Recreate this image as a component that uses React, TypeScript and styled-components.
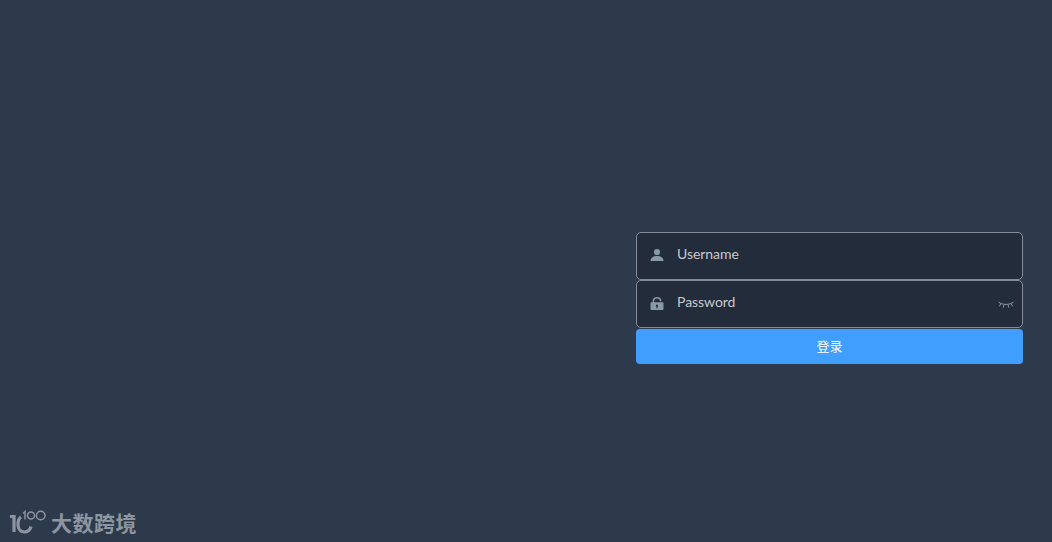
import styled, { createGlobalStyle } from 'styled-components';

const GlobalStyle = createGlobalStyle`
  html, body {
    margin: 0;
    padding: 0;
    height: 100%;
    background: #2d3a4b;
  }
  body {
    font-family: Lato, "Liberation Sans", "Noto Sans CJK SC", sans-serif;
    overflow: hidden;
  }
`;

const Page = styled.div`
  height: 542px;
  display: flex;
  flex-direction: column;
  justify-content: space-between;
  background: #2d3a4b;
`;

const LoginForm = styled.form`
  align-self: flex-end;
  width: 387px;
  margin: 232px 29px 0 0;
  display: flex;
  flex-direction: column;
`;

const Field = styled.div`
  height: 46px;
  display: flex;
  align-items: center;
  border: 1px solid #858c97;
  border-radius: 5px;
  background: #232c3a;
  color: #889aa4;
`;

const IconSlot = styled.span`
  width: 40px;
  box-sizing: border-box;
  padding-right: 1px;
  flex: none;
  display: flex;
  justify-content: center;
  margin-top: -2px;
`;

const Input = styled.input`
  flex: 1;
  min-width: 0;
  height: 100%;
  padding: 0 0 6px;
  box-sizing: border-box;
  border: none;
  outline: none;
  background: transparent;
  font: 14px Lato, "Liberation Sans", sans-serif;
  letter-spacing: -0.05px;
  color: #eee;
  &::placeholder {
    color: #c6c9ce;
    opacity: 1;
  }
`;

const EyeSlot = styled.span`
  width: 32px;
  flex: none;
  display: flex;
  justify-content: center;
  margin-top: 2px;
`;

const SubmitButton = styled.button`
  height: 35px;
  margin-top: 1px;
  border: none;
  border-radius: 4px;
  background: #409eff;
  color: #fff;
  font: 13px "Noto Sans CJK SC", sans-serif;
  padding: 0 0 3px;
`;

const Brand = styled.div`
  display: flex;
  align-items: center;
  gap: 4px;
  margin: 0 0 5px 10px;
  color: #8d95a1;
`;

const BrandName = styled.span`
  font: 700 21px/28px "Noto Sans CJK SC", sans-serif;
  letter-spacing: 0.5px;
  margin-top: -3px;
`;

function UserIcon() {
  return (
    <svg width="14" height="14" viewBox="0 0 14 14" fill="#889aa4">
      <circle cx="7" cy="4" r="3.1" />
      <path d="M.5 13C.5 10 3 8 7 8S13.5 10 13.5 13Z" />
    </svg>
  );
}

function LockIcon() {
  return (
    <svg width="14" height="14" viewBox="0 0 14 14" fill="#889aa4">
      <path
        d="M3.4 7V5.2C3.4 3 5 1.8 7 1.8S10.6 3 10.6 5.2"
        fill="none"
        stroke="#889aa4"
        strokeWidth="1.5"
      />
      <path
        fillRule="evenodd"
        d="M1.5 6.2H12.5A1 1 0 0 1 13.5 7.2V13A1 1 0 0 1 12.5 14H1.5A1 1 0 0 1 .5 13V7.2A1 1 0 0 1 1.5 6.2ZM7 8.6A1.1 1.1 0 0 0 6.4 10.6V12.2H7.6V10.6A1.1 1.1 0 0 0 7 8.6Z"
      />
    </svg>
  );
}

function EyeClosedIcon() {
  return (
    <svg width="16" height="8" viewBox="0 0 16 8" fill="none" stroke="#889aa4" strokeWidth="1">
      <path d="M.5 1C4 4.2 12 4.2 15.5 1" />
      <path d="M2.8 3L1.2 5.4M5.8 4L5.4 6.6M10.2 4L10.6 6.6M13.2 3L14.8 5.4" />
    </svg>
  );
}

function BrandMark() {
  return (
    <svg width="37" height="27" viewBox="0 0 37 27" fill="none" stroke="#8d95a1">
      <path d="M0 6.5H4V22" strokeWidth="3.2" />
      <path d="M11 7C8.5 8.5 8 11.5 8 14.5C8 19 10.5 22 14.5 22C17.5 22 20 20 21 16.5" strokeWidth="3.2" />
      <path d="M13 3.5L15 1.5V9.5" strokeWidth="1.4" />
      <circle cx="21" cy="5.5" r="3.5" strokeWidth="1.5" />
      <circle cx="30.7" cy="5.5" r="4.3" strokeWidth="1.5" />
    </svg>
  );
}

export default function App() {
  return (
    <>
      <GlobalStyle />
      <Page>
        <LoginForm onSubmit={(e) => e.preventDefault()}>
          <Field>
            <IconSlot>
              <UserIcon />
            </IconSlot>
            <Input type="text" placeholder="Username" />
          </Field>
          <Field>
            <IconSlot>
              <LockIcon />
            </IconSlot>
            <Input type="password" placeholder="Password" />
            <EyeSlot>
              <EyeClosedIcon />
            </EyeSlot>
          </Field>
          <SubmitButton type="submit">登录</SubmitButton>
        </LoginForm>
        <Brand>
          <BrandMark />
          <BrandName>大数跨境</BrandName>
        </Brand>
      </Page>
    </>
  );
}
